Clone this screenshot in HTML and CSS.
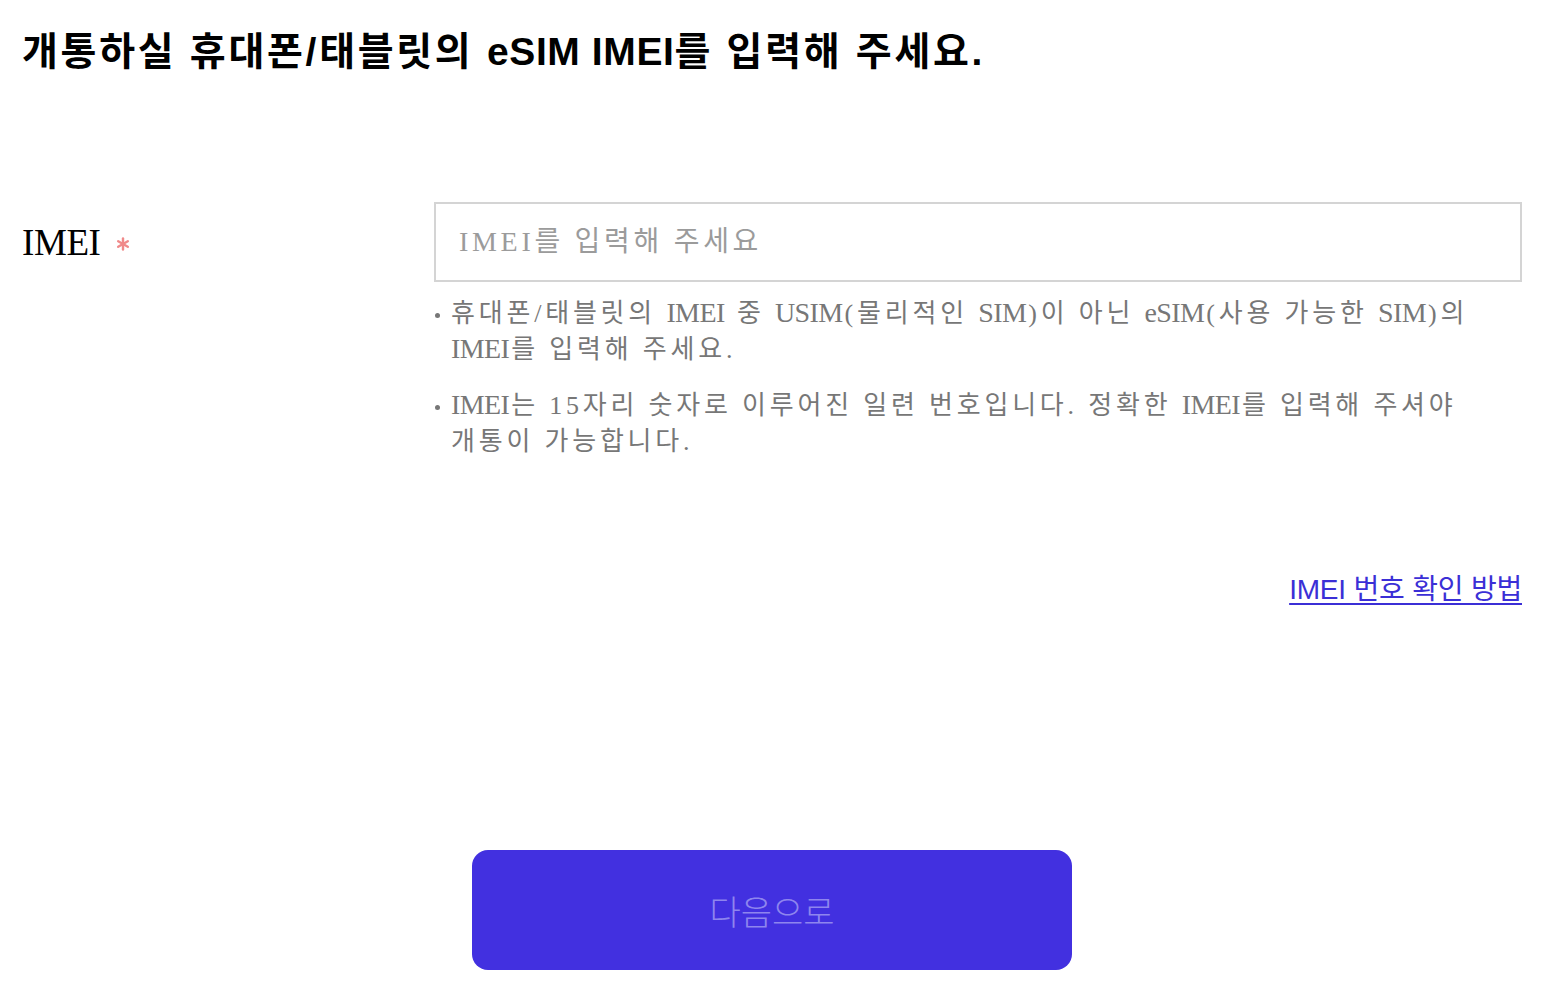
FILE: index.html
```html
<!DOCTYPE html>
<html lang="ko">
<head>
<meta charset="utf-8">
<title>eSIM IMEI 입력</title>
<link rel="stylesheet" href="styles.css">
</head>
<body>
<main class="page">
  <h1 class="title">개통하실 휴대폰/태블릿의 <span class="title-en">eSIM IMEI</span>를 입력해 주세요.</h1>
  <div class="form-row">
    <label class="label" for="imei">IMEI<svg class="req" viewBox="0 0 14 14" aria-hidden="true"><g stroke="#f08a8a" stroke-width="2.4" stroke-linecap="round"><line x1="7" y1="1.5" x2="7" y2="12.5"/><line x1="2.2" y1="4.2" x2="11.8" y2="9.8"/><line x1="2.2" y1="9.8" x2="11.8" y2="4.2"/></g></svg></label>
    <div class="field">
      <input id="imei" class="input" type="text" placeholder="IMEI를 입력해 주세요">
      <ul class="help">
        <li>휴대폰/태블릿의 <span class="en">IMEI</span> 중 <span class="en">USIM</span>(물리적인 <span class="en">SIM</span>)이 아닌 <span class="en">eSIM</span>(사용 가능한 <span class="en">SIM</span>)의 <span class="en">IMEI</span>를 입력해 주세요.</li>
        <li><span class="en">IMEI</span>는 15자리 숫자로 이루어진 일련 번호입니다. 정확한 <span class="en">IMEI</span>를 입력해 주셔야 개통이 가능합니다.</li>
      </ul>
    </div>
  </div>
  <div class="link-row"><a class="link" href="#">IMEI 번호 확인 방법</a></div>
  <div class="btn-row"><button class="btn" type="button">다음으로</button></div>
</main>
</body>
</html>
```

FILE: styles.css
```css
* { box-sizing: border-box; }
html, body { margin: 0; padding: 0; background: #fff; }
body { font-family: "Liberation Serif", "Noto Sans CJK KR", serif; }
.page {
  width: 1554px;
  padding: 0 32px 0 22px;
}
.title {
  margin: 0;
  padding-top: 27px;
  font-family: "Liberation Sans", "Noto Sans CJK KR", sans-serif;
  font-weight: 700;
  font-size: 39px;
  line-height: 50px;
  letter-spacing: 2.7px;
  color: #000;
}
.title-en { letter-spacing: 0.6px; }
.form-row {
  display: flex;
  margin-top: 125px;
}
.label {
  width: 412px;
  flex: none;
  display: flex;
  align-items: center;
  height: 80px;
  font-family: "Liberation Serif", "Noto Sans CJK KR", serif;
  font-size: 37px;
  letter-spacing: -0.4px;
  color: #000;
}
.req {
  width: 14px;
  height: 14px;
  margin-left: 15px;
  margin-top: 4px;
}
.field { flex: 1; }
.input {
  display: block;
  width: 100%;
  height: 80px;
  border: 2px solid #d4d4d4;
  padding: 0 23px;
  font-family: "Liberation Serif", "Noto Sans CJK KR", serif;
  font-size: 28px;
  letter-spacing: 3.7px;
  color: #333;
  outline: none;
}
.input::placeholder { color: #9b9b9b; }
.help {
  list-style: none;
  margin: 14px 0 0;
  padding: 0 45px 0 0;
  color: #777;
  font-size: 26px;
  line-height: 36px;
  letter-spacing: 3.8px;
  word-break: keep-all;
}
.help .en {
  font-size: 28px;
  line-height: 1;
  letter-spacing: -0.6px;
  margin-right: 2px;
}
.help li {
  position: relative;
  padding-left: 17px;
  margin-bottom: 20px;
}
.help li::before {
  content: "";
  position: absolute;
  left: 1px;
  top: 17px;
  width: 5px;
  height: 5px;
  border-radius: 50%;
  background: #777;
}
.link-row {
  display: flex;
  justify-content: flex-end;
  margin-top: 90px;
}
.link {
  font-family: "Liberation Sans", "Noto Sans CJK KR", sans-serif;
  font-size: 28px;
  line-height: 40px;
  color: #3b2fd6;
  text-decoration: underline;
  text-underline-offset: 4px;
  letter-spacing: -0.2px;
}
.btn-row {
  display: flex;
  justify-content: center;
  margin-top: 240px;
}
.btn {
  width: 600px;
  height: 120px;
  border: none;
  border-radius: 16px;
  background: #4230e0;
  color: #8e85ee;
  font-family: "Liberation Sans", "Noto Sans CJK KR", sans-serif;
  font-size: 34px;
  font-weight: 300;
}
```
